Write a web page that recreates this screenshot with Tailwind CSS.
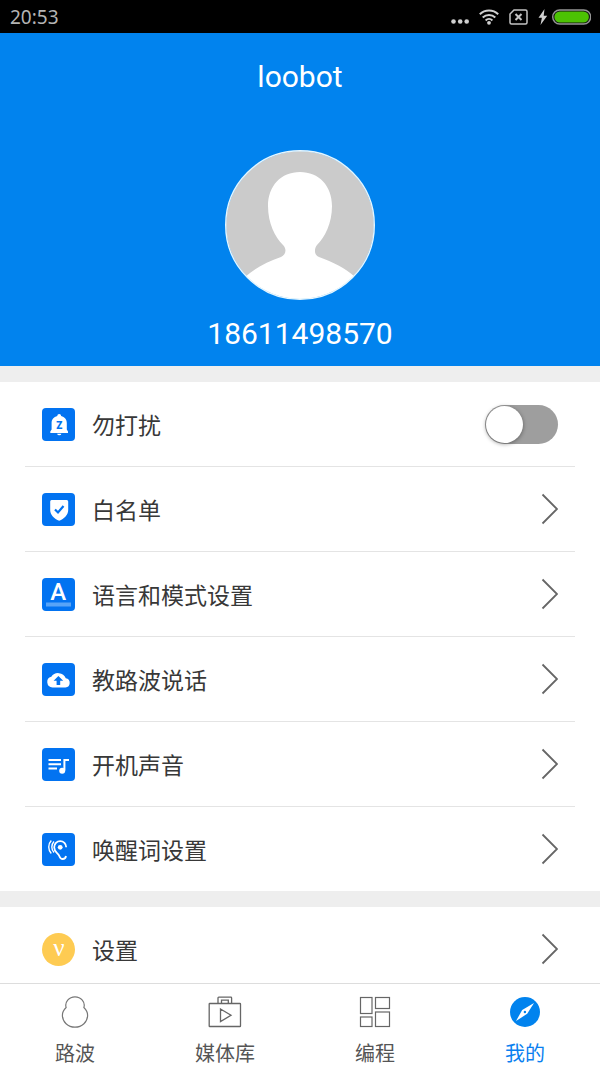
<!DOCTYPE html>
<html lang="zh-CN">
<head>
  <meta charset="UTF-8" />
  <meta name="viewport" content="width=device-width, initial-scale=1" />
  <title>loobot</title>
  <script src="https://cdn.jsdelivr.net/npm/@tailwindcss/browser@4"></script>
</head>
<body class="bg-white h-dvh flex flex-col overflow-hidden font-['Noto_Sans_CJK_SC',sans-serif] text-[#383838]">
  <!-- Status bar -->
  <div class="bg-black h-[33px] shrink-0 flex items-center justify-between pl-[10px] pr-[9px] text-[#b4b4b4]">
    <span class="font-['Noto_Sans',sans-serif] text-[19px] leading-6">20:53</span>
    <div class="flex items-center gap-[10px]">
      <svg class="w-[18px] h-4" viewBox="0 0 18 16" fill="#d0d0d0">
        <circle cx="2.5" cy="12.500" r="2.300" /><circle cx="9.2" cy="12.500" r="2.300" /><circle cx="15.7" cy="12.500" r="2.300" />
      </svg>
      <svg class="w-5 h-4" viewBox="0 0 20 16" fill="none" stroke="#d0d0d0" stroke-width="2">
        <path d="M.8 5.200a13.2 13.2 0 0 1 18.4 0M3.7 8.400a9.2 9.2 0 0 1 12.6 0M6.6 11.400a5 5 0 0 1 6.8 0" />
        <circle cx="10" cy="13.800" r="1.9" fill="#d0d0d0" stroke="none" />
      </svg>
      <svg class="w-[19px] h-4" viewBox="0 0 19 16" fill="none" stroke="#c4c4c4">
        <path d="M5 1h11.5Q18 1 18 2.500v11Q18 15 16.500 15h-14Q1 15 1 13.500V5z" stroke-width="1.500" />
        <path d="M6.500 5l6 6M12.500 5l-6 6" stroke-width="2" />
      </svg>
      <div class="flex items-center gap-1">
        <svg class="w-[10px] h-4" viewBox="0 0 10 16" fill="#d0d0d0"><path d="M6.500 0L.5 8.700h3.400L2.500 16l6.700-9.300H5.700z" /></svg>
        <svg class="w-[39px] h-4" viewBox="0 0 39 16">
          <rect x=".7" y="1" width="38" height="14" rx="7" fill="#111" stroke="#959595" stroke-width="1.400" />
          <rect x="2.400" y="2.500" width="34.500" height="11" rx="5.500" fill="#4cc203" />
        </svg>
      </div>
    </div>
  </div>

  <main class="flex-1 min-h-0 overflow-y-auto [scrollbar-width:none] bg-[#eeeeee]">
    <!-- Profile -->
    <header class="bg-[#0183ee] text-white font-[Roboto,sans-serif] flex flex-col items-center pt-6 pb-3">
      <h1 class="text-[30px] leading-10">loobot</h1>
      <svg class="size-[150px] mt-[53px]" viewBox="0 0 150 150">
        <defs><clipPath id="avatar"><circle cx="75" cy="75" r="74" /></clipPath></defs>
        <circle cx="75" cy="75" r="74" fill="#cbcbcb" />
        <path clip-path="url(#avatar)" fill="#fff" d="M75 22c19 0 32 14 32 34 0 17-7 31-15 39-3 4-3 10 2 12 14 5 26 11 36 20v30H20v-30c10-9 22-15 36-20 5-2 6-8 2-12-8-8-15-22-15-39 0-20 13-34 32-34z" />
        <circle cx="75" cy="75" r="74.300" fill="none" stroke="#e4f6ff" stroke-width="1.400" />
      </svg>
      <p class="mt-[14px] text-[30px] leading-10">18611498570</p>
    </header>

    <!-- Robot settings -->
    <ul class="mt-4 bg-white px-[25px] text-[23px] leading-8 divide-y divide-[#e4e4e4]">
      <li>
        <div class="flex items-center gap-[17px] h-[84px] px-[17px]">
          <svg class="size-[33px]" viewBox="0 0 33 33">
            <rect width="33" height="33" rx="4" fill="#0273f1" />
            <path fill="#fff" d="M17.200 6c1.100 0 1.900.8 1.900 2 3.600.8 5.700 3.500 5.700 7v6.500L26 23.500V25H8.300v-1.500l1.300-2V15c0-3.500 2.100-6.200 5.700-7 0-1.200.8-2 1.900-2zM15.100 25.700h4.300a2.200 2 0 0 1-4.300 0z" />
            <text x="17.200" y="20.500" text-anchor="middle" font-family="Roboto, sans-serif" font-size="10" font-weight="900" fill="#0273f1">Z</text>
          </svg>
          <label for="dnd" class="flex-1">勿打扰</label>
          <input type="checkbox" id="dnd" role="switch" class="appearance-none w-[73px] h-[39px] rounded-full bg-[#9e9e9e] p-px before:block before:size-[37px] before:rounded-full before:bg-white before:shadow-[0_1px_4px_rgba(0,0,0,0.4)] checked:bg-[#0183ee] checked:before:ml-[34px]" />
        </div>
      </li>
      <li>
        <a href="#whitelist" class="flex items-center gap-[17px] h-[84px] px-[17px]">
          <svg class="size-[33px]" viewBox="0 0 33 33">
            <rect width="33" height="33" rx="4" fill="#0273f1" />
            <path fill="#fff" d="M9.500 7h15.200q1.500 0 1.500 1.500V17c0 5-4 8.600-9 10.800-5-2.200-9-5.800-9-10.800V8.500Q8.200 7 9.500 7z" />
            <path d="M13 16.500l3 3 5.500-6.500" fill="none" stroke="#0273f1" stroke-width="2.200" />
          </svg>
          <span class="flex-1">白名单</span>
          <svg class="w-[17px] h-8" viewBox="0 0 17 32" fill="none" stroke="#666" stroke-width="1.800"><path d="M1.500 1.500L16 16 1.500 30.500" /></svg>
        </a>
      </li>
      <li>
        <a href="#language" class="flex items-center gap-[17px] h-[84px] px-[17px]">
          <svg class="size-[33px]" viewBox="0 0 33 33">
            <rect width="33" height="33" rx="4" fill="#0273f1" />
            <text x="16.200" y="21.500" text-anchor="middle" font-family="Roboto, sans-serif" font-size="24" font-weight="500" fill="#fff">A</text>
            <rect x="4" y="24.500" width="25" height="4" fill="#58a4f7" />
          </svg>
          <span class="flex-1">语言和模式设置</span>
          <svg class="w-[17px] h-8" viewBox="0 0 17 32" fill="none" stroke="#666" stroke-width="1.800"><path d="M1.500 1.500L16 16 1.500 30.500" /></svg>
        </a>
      </li>
      <li>
        <a href="#teach" class="flex items-center gap-[17px] h-[84px] px-[17px]">
          <svg class="size-[33px]" viewBox="0 0 33 33">
            <rect width="33" height="33" rx="4" fill="#0273f1" />
            <path fill="#fff" d="M10.500 24.500A5.500 5.500 0 0 1 9.300 13.700 8.300 8.300 0 0 1 23.800 15.200a4.700 4.700 0 0 1-.3 9.300z" />
            <path fill="#0273f1" d="M16.400 13l4.800 4.800h-3V22h-3.600v-4.200h-3z" />
          </svg>
          <span class="flex-1">教路波说话</span>
          <svg class="w-[17px] h-8" viewBox="0 0 17 32" fill="none" stroke="#666" stroke-width="1.800"><path d="M1.500 1.500L16 16 1.500 30.500" /></svg>
        </a>
      </li>
      <li>
        <a href="#sound" class="flex items-center gap-[17px] h-[84px] px-[17px]">
          <svg class="size-[33px]" viewBox="0 0 33 33">
            <rect width="33" height="33" rx="4" fill="#0273f1" />
            <path d="M6.500 12h12.500M6.500 16.200h12.500M6.500 20.400h8.500M22.400 22.500V12H27" fill="none" stroke="#fff" stroke-width="2" />
            <circle cx="20.200" cy="22.800" r="3" fill="#fff" />
          </svg>
          <span class="flex-1">开机声音</span>
          <svg class="w-[17px] h-8" viewBox="0 0 17 32" fill="none" stroke="#666" stroke-width="1.800"><path d="M1.500 1.500L16 16 1.500 30.500" /></svg>
        </a>
      </li>
      <li>
        <a href="#wake" class="flex items-center gap-[17px] h-[84px] px-[17px]">
          <svg class="size-[33px]" viewBox="0 0 33 33">
            <rect width="33" height="33" rx="4" fill="#0273f1" />
            <g fill="none" stroke="#fff" stroke-width="1.800">
              <path d="M9.300 7.500a9.500 9.500 0 0 0 0 13M12 8.500a8 8 0 0 0 0 11" stroke-width="1.400" />
              <path d="M24.200 14.200a6 6 0 0 0-12 0c0 5.500 4 5.500 5.200 9 .7 2 1.700 2.800 3.300 2.800 1.800 0 3-1.200 3.300-3" />
            </g>
            <circle cx="18.200" cy="14.300" r="2.400" fill="#fff" />
          </svg>
          <span class="flex-1">唤醒词设置</span>
          <svg class="w-[17px] h-8" viewBox="0 0 17 32" fill="none" stroke="#666" stroke-width="1.800"><path d="M1.500 1.500L16 16 1.500 30.500" /></svg>
        </a>
      </li>
    </ul>

    <!-- App settings -->
    <ul class="mt-4 bg-white px-[25px] text-[23px] leading-8">
      <li>
        <a href="#settings" class="flex items-center gap-[17px] h-[84px] px-[17px]">
          <svg class="size-[33px]" viewBox="0 0 33 33">
            <circle cx="16.500" cy="16.500" r="16.500" fill="#fecb52" />
            <text x="17" y="23" text-anchor="middle" font-family="Liberation Serif, serif" font-size="25" fill="#fff">ν</text>
          </svg>
          <span class="flex-1">设置</span>
          <svg class="w-[17px] h-8" viewBox="0 0 17 32" fill="none" stroke="#666" stroke-width="1.800"><path d="M1.500 1.500L16 16 1.500 30.500" /></svg>
        </a>
      </li>
    </ul>
  </main>

  <!-- Bottom tabs -->
  <nav class="shrink-0 grid grid-cols-4 bg-white border-t border-[#dddddd] pt-3 text-xl leading-7 text-[#555555]">
    <a href="#robot" class="flex flex-col items-center gap-[11px]">
      <svg class="w-9 h-8" viewBox="0 0 36 32" fill="none" stroke="#777" stroke-width="1.200">
        <path d="M9.100 11.500C7.500 6 12 .8 18 .8S28.500 6 26.900 11.500C29 13.500 30.600 16 30.600 19.200 30.600 26 25 31.200 18 31.200S5.400 26 5.400 19.200C5.400 16 7 13.500 9.100 11.500z" />
      </svg>
      路波
    </a>
    <a href="#media" class="flex flex-col items-center gap-[11px]">
      <svg class="w-9 h-8" viewBox="0 0 36 32" fill="none" stroke="#666" stroke-width="1.300">
        <rect x="2.200" y="7.500" width="31.300" height="23" rx=".6" />
        <path d="M11 7.500V2q0-.8.8-.8h12q.8 0 .8.8v5.500M14.500 7.500V4.200h6.800v3.300M13.500 13l10.500 6.300-10.500 6.200z" />
      </svg>
      媒体库
    </a>
    <a href="#code" class="flex flex-col items-center gap-[11px]">
      <svg class="w-9 h-8" viewBox="0 0 36 32" fill="none" stroke="#666" stroke-width="1.200">
        <rect x="3.500" y="1.500" width="11.500" height="16" />
        <rect x="18.500" y="1.500" width="14" height="11" />
        <rect x="3.500" y="21" width="11.500" height="9.500" />
        <rect x="18.500" y="16" width="14" height="14.500" />
      </svg>
      编程
    </a>
    <a href="#me" class="flex flex-col items-center gap-[11px] text-[#0a7ff0]" aria-current="page">
      <svg class="w-9 h-8" viewBox="0 0 36 32">
        <circle cx="18" cy="16" r="15" fill="#0183ee" />
        <path fill="#fff" d="M27 7l-6.800 10.800L9 25l6.200-11z" />
        <circle cx="17.900" cy="16" r="1.200" fill="#0183ee" />
      </svg>
      我的
    </a>
  </nav>
</body>
</html>
